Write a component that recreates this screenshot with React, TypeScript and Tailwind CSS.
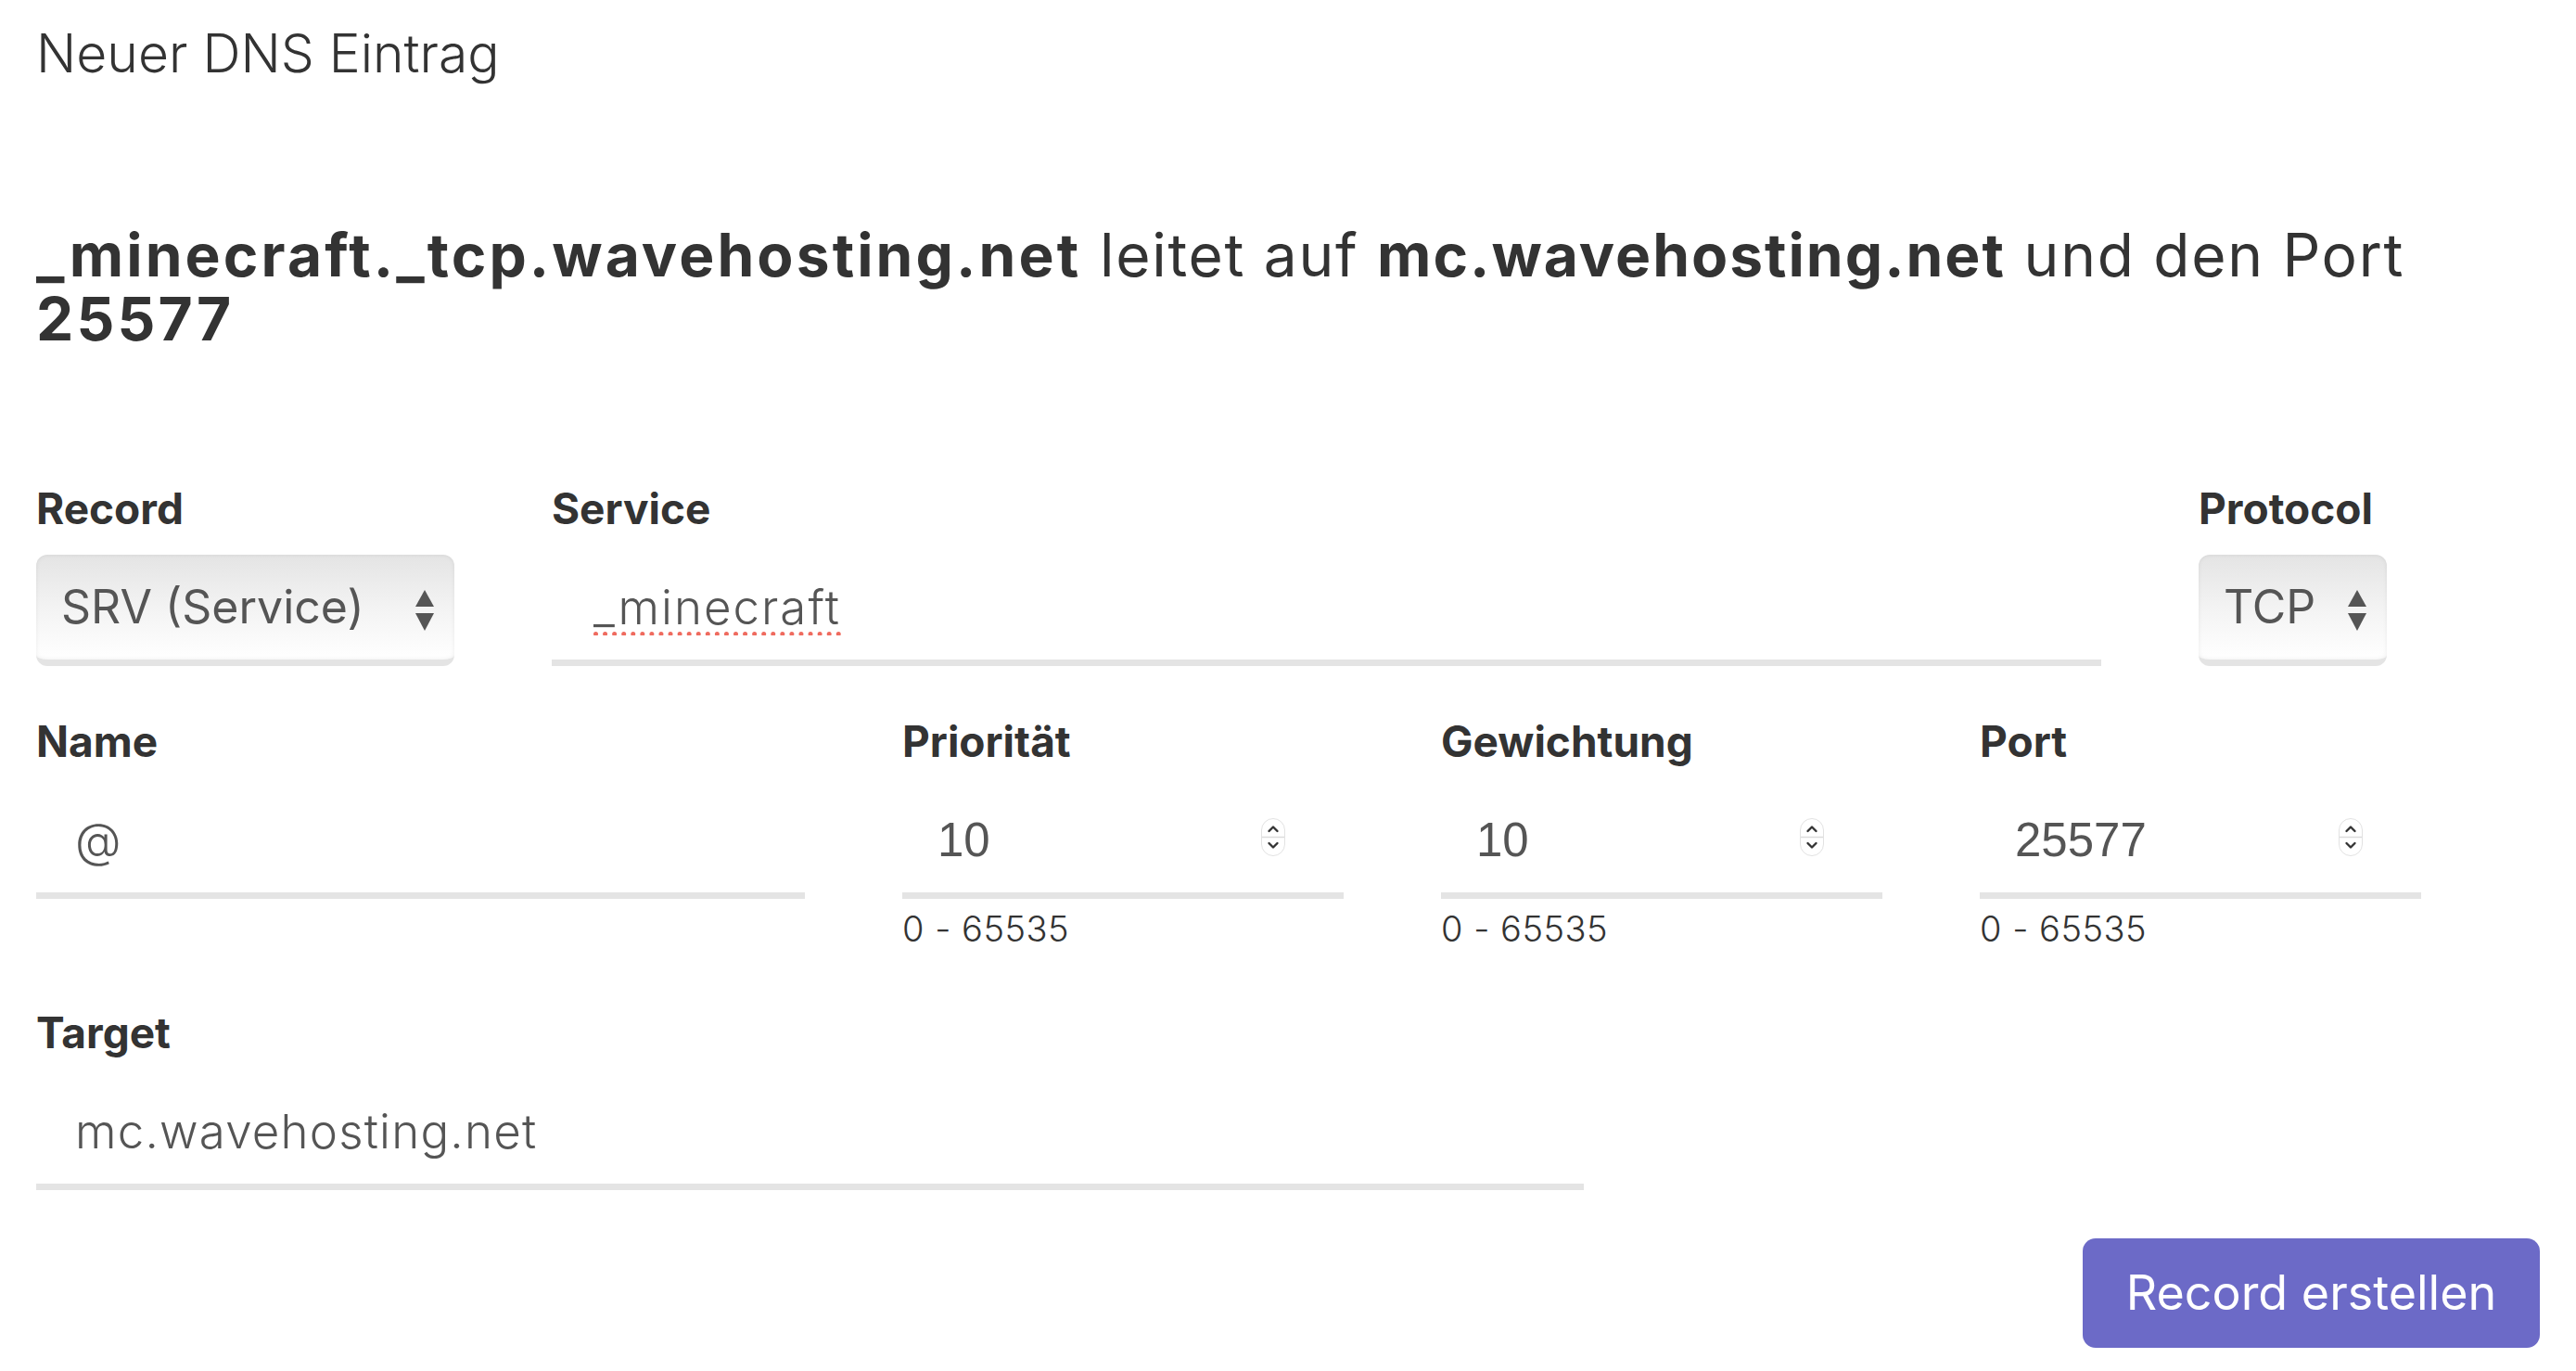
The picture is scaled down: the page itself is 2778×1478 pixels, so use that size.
import React from 'react';

const sans = "font-['Inter','Noto_Sans',sans-serif]";

function Label({ children }: { children: React.ReactNode }) {
  return <div className={`${sans} text-[46px] leading-[56px] font-bold text-[#333]`}>{children}</div>;
}

function SelectArrows() {
  return (
    <svg className="pointer-events-none absolute right-[21px] top-1/2 -translate-y-1/2" width="22" height="46" viewBox="0 0 22 46">
      <path d="M11 1 L21 19 L1 19 Z" fill="#555" />
      <path d="M1 26 L21 26 L11 45 Z" fill="#555" />
    </svg>
  );
}

function FakeSelect({ value, width }: { value: string; width: string }) {
  return (
    <div className={`relative ${width} h-[120px]`}>
      <select
        defaultValue={value}
        className={`${sans} appearance-none w-full h-full rounded-[12px] border-b-[7px] border-[#e4e4e4] bg-linear-to-b from-[#e4e4e4] via-[#f3f3f3] to-white pl-[27px] pr-[60px] text-[50px] text-[#555] shadow-[inset_0_0_5px_rgba(0,0,0,0.07)] outline-none`}
      >
        <option value={value}>{value}</option>
      </select>
      <SelectArrows />
    </div>
  );
}

function Spinner() {
  return (
    <svg className="pointer-events-none absolute right-[63px] top-[33px]" width="26" height="41" viewBox="0 0 26 41">
      <rect x="0.5" y="0.5" width="25" height="40" rx="12.5" fill="#fff" stroke="#e2e2e2" />
      <line x1="1" y1="20.5" x2="25" y2="20.5" stroke="#dcdcdc" strokeWidth="1.5" />
      <path d="M8.5 14 L13 9.5 L17.5 14" fill="none" stroke="#333" strokeWidth="2.4" strokeLinecap="round" strokeLinejoin="round" />
      <path d="M8.5 27 L13 31.5 L17.5 27" fill="none" stroke="#333" strokeWidth="2.4" strokeLinecap="round" strokeLinejoin="round" />
    </svg>
  );
}

function NumberField({ label, value }: { label: string; value: string }) {
  return (
    <div className="w-[476px] flex flex-col">
      <Label>{label}</Label>
      <div className="relative mt-[22px] h-[120px]">
        <input
          type="number"
          defaultValue={value}
          className="w-full h-full border-b-[7px] border-[#e4e4e4] bg-transparent pl-[38px] font-['Liberation_Sans',Arial,sans-serif] text-[51px] text-[#555] outline-none [appearance:textfield] [&::-webkit-inner-spin-button]:appearance-none [&::-webkit-outer-spin-button]:appearance-none"
        />
        <Spinner />
      </div>
      <div className={`${sans} font-light mt-[9px] text-[38px] leading-[46px] tracking-[0.5px] text-[#333]`}>0 - 65535</div>
    </div>
  );
}

export default function App() {
  return (
    <div className="min-h-screen bg-white px-[39px] pt-[22px] pb-[25px] text-[#333]">
      <h3 className={`${sans} font-light text-[57px] leading-[72px]`}>Neuer DNS Eintrag</h3>

      <p className={`${sans} mt-[146px] text-[64px] leading-[69px] tracking-[1.7px]`}>
        <b className="font-bold tracking-[3.1px]">_minecraft._tcp.wavehosting.net</b> leitet auf{' '}
        <b className="font-bold tracking-[2px]">mc.wavehosting.net</b> und den Port
        <br />
        <b className="font-bold tracking-[3.1px]">25577</b>
      </p>

      <div className="mt-[142px] flex gap-[105px]">
        <div className="flex flex-col">
          <Label>Record</Label>
          <div className="mt-[22px]">
            <FakeSelect value="SRV (Service)" width="w-[451px]" />
          </div>
        </div>
        <div className="flex flex-col w-[1671px]">
          <Label>Service</Label>
          <input
            type="text"
            defaultValue="_minecraft"
            className={`${sans} font-light mt-[22px] h-[120px] w-full border-b-[7px] border-[#e4e4e4] bg-transparent pl-[45px] text-[51px] tracking-[2px] text-[#555] outline-none underline decoration-dotted decoration-[5px] decoration-[#ef6b5f] underline-offset-[8px]`}
          />
        </div>
        <div className="flex flex-col">
          <Label>Protocol</Label>
          <div className="mt-[22px]">
            <FakeSelect value="TCP" width="w-[203px]" />
          </div>
        </div>
      </div>

      <div className="mt-[53px] flex gap-[105px]">
        <div className="w-[829px] flex flex-col">
          <Label>Name</Label>
          <input
            type="text"
            defaultValue="@"
            className={`${sans} font-light mt-[22px] h-[120px] w-full border-b-[7px] border-[#e4e4e4] bg-transparent pl-[42px] text-[51px] text-[#555] outline-none`}
          />
        </div>
        <NumberField label="Priorität" value="10" />
        <NumberField label="Gewichtung" value="10" />
        <NumberField label="Port" value="25577" />
      </div>

      <div className="mt-[61px] w-[1669px] flex flex-col">
        <Label>Target</Label>
        <input
          type="text"
          defaultValue="mc.wavehosting.net"
          className={`${sans} font-light mt-[22px] h-[120px] w-full border-b-[7px] border-[#e4e4e4] bg-transparent pl-[42px] text-[51px] tracking-[1.2px] text-[#555] outline-none`}
        />
      </div>

      <div className="mt-[52px] flex justify-end">
        <button
          type="button"
          className={`${sans} h-[118px] w-[493px] rounded-[14px] bg-[#6c6ac7] text-[52px] text-white`}
        >
          Record erstellen
        </button>
      </div>
    </div>
  );
}
